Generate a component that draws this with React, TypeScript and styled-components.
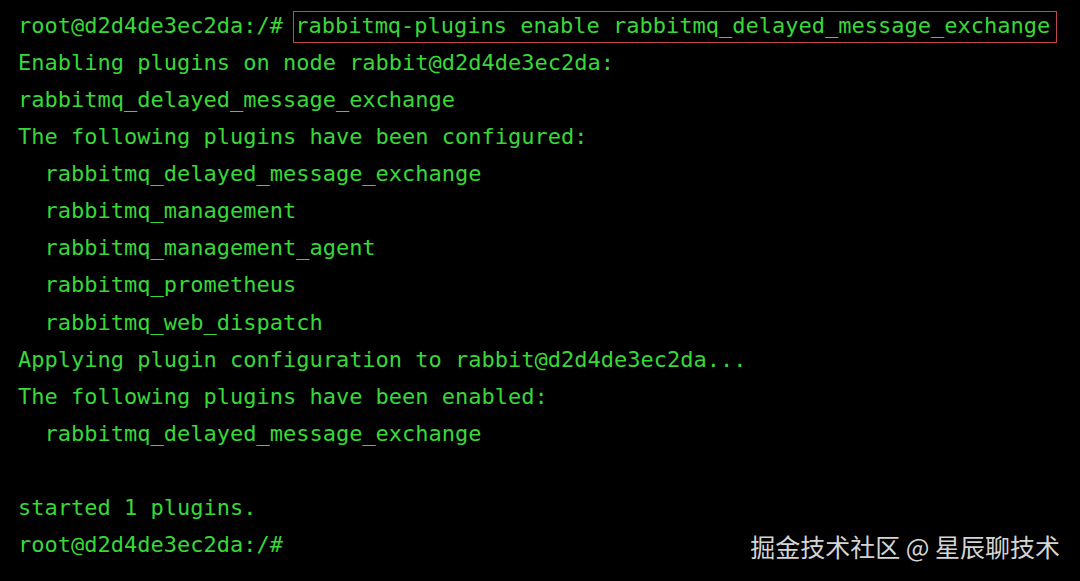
import React from "react";
import styled, { createGlobalStyle } from "styled-components";

const Global = createGlobalStyle`
  html, body { margin: 0; padding: 0; background: #000; }
  body { width: 1080px; height: 581px; overflow: hidden; }
`;

const Terminal = styled.div`
  position: relative;
  width: 1080px;
  height: 581px;
  box-sizing: border-box;
  background: #000;
  padding: 6.5px 0 0 18px;
  font-family: "DejaVu Sans Mono", "Liberation Mono", monospace;
  font-size: 22px;
  line-height: 37.14px;
  color: #38d838;
  white-space: pre;
`;

const Line = styled.div`
  height: 37.14px;
`;

const Highlight = styled.span`
  margin-left: -3px;
  padding: 1px 6px 4px 1px;
  border: 1.5px solid #c4484a;
`;

const Watermark = styled.div`
  position: absolute;
  right: 20px;
  bottom: 20px;
  font-family: "Noto Sans CJK SC", "Noto Sans", sans-serif;
  font-size: 25px;
  line-height: 30px;
  letter-spacing: 0;
  color: #d4d4d4;
  white-space: pre;
`;

const lines: string[] = [
  "Enabling plugins on node rabbit@d2d4de3ec2da:",
  "rabbitmq_delayed_message_exchange",
  "The following plugins have been configured:",
  "  rabbitmq_delayed_message_exchange",
  "  rabbitmq_management",
  "  rabbitmq_management_agent",
  "  rabbitmq_prometheus",
  "  rabbitmq_web_dispatch",
  "Applying plugin configuration to rabbit@d2d4de3ec2da...",
  "The following plugins have been enabled:",
  "  rabbitmq_delayed_message_exchange",
  "",
  "started 1 plugins.",
  "root@d2d4de3ec2da:/#",
];

export default function App() {
  return (
    <>
      <Global />
      <Terminal>
        <Line>
          {"root@d2d4de3ec2da:/# "}
          <Highlight>rabbitmq-plugins enable rabbitmq_delayed_message_exchange</Highlight>
        </Line>
        {lines.map((l, i) => (
          <Line key={i}>{l}</Line>
        ))}
        <Watermark>掘金技术社区 @ 星辰聊技术</Watermark>
      </Terminal>
    </>
  );
}
